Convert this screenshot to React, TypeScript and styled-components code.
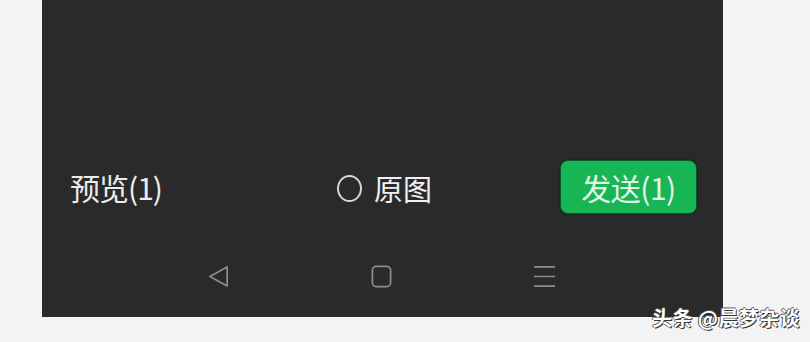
import React from "react";
import styled, { createGlobalStyle } from "styled-components";

const GlobalStyle = createGlobalStyle`
  html, body {
    margin: 0;
    padding: 0;
    background: #f3f3f5;
  }
  body {
    font-family: "Noto Sans CJK SC", "Noto Sans", sans-serif;
  }
`;

function App() {
  return (
    <>
      <GlobalStyle />
      <Page>
        <Panel>
          <Toolbar>
            <Preview>预览(1)</Preview>
            <Original>
              <Radio />
              <OriginalLabel>原图</OriginalLabel>
            </Original>
            <SendCell>
              <SendButton>发送(1)</SendButton>
            </SendCell>
          </Toolbar>
          <NavBar>
            <NavIcon viewBox="0 0 24 24">
              <path d="M21 2 L3 12 L21 22 Z" fill="none" stroke="#8d8d8d" strokeWidth="1.8" strokeLinejoin="round" />
            </NavIcon>
            <NavIcon viewBox="0 0 24 24">
              <rect x="2.5" y="1.5" width="19" height="21" rx="4" fill="none" stroke="#8d8d8d" strokeWidth="1.8" />
            </NavIcon>
            <NavIcon viewBox="0 0 24 24">
              <path d="M1 2 H23 M1 12 H23 M1 22 H23" stroke="#8d8d8d" strokeWidth="1.8" />
            </NavIcon>
          </NavBar>
        </Panel>
        <Watermark>头条 @晨梦杂谈</Watermark>
      </Page>
    </>
  );
}

export default App;

const Page = styled.div`
  position: relative;
  width: 810px;
  height: 342px;
  padding-left: 42px;
  box-sizing: border-box;
`;

const Panel = styled.div`
  width: 681px;
  height: 317px;
  background: #2a2a2a;
  display: flex;
  flex-direction: column;
  justify-content: flex-end;
`;

const Toolbar = styled.div`
  display: grid;
  grid-template-columns: 1fr auto 1fr;
  align-items: center;
  height: 54px;
  padding: 0 26px 0 28px;
`;

const Preview = styled.div`
  font-size: 30px;
  color: #ececec;
  letter-spacing: -1px;
  line-height: 1;
`;

const Original = styled.div`
  display: flex;
  align-items: center;
  gap: 12px;
  margin-top: 2px;
  padding-left: 2px;
`;

const Radio = styled.span`
  width: 21px;
  height: 23px;
  border: 2px solid #d6d6d6;
  border-radius: 50%;
`;

const OriginalLabel = styled.span`
  font-size: 29px;
  color: #f0f0f0;
  line-height: 1;
`;

const SendCell = styled.div`
  display: flex;
  justify-content: flex-end;
`;

const SendButton = styled.button`
  width: 137px;
  height: 54px;
  border: 1px solid #0d5a2a;
  border-radius: 8px;
  background: #17b553;
  color: #e2f6e8;
  font-family: "Noto Sans CJK SC", "Noto Sans", sans-serif;
  font-size: 30px;
  letter-spacing: -0.5px;
  padding: 0;
  box-shadow: 0 0 2px rgba(0, 0, 0, 0.6);
`;

const NavBar = styled.div`
  height: 103px;
  box-sizing: border-box;
  display: flex;
  justify-content: center;
  align-items: flex-start;
  padding: 51px 2px 0 0;
  gap: 140px;
`;

const NavIcon = styled.svg`
  width: 23px;
  height: 23px;
`;

const Watermark = styled.div`
  position: absolute;
  right: 10px;
  top: 303px;
  font-size: 20px;
  font-weight: 700;
  color: #ffffff;
  letter-spacing: 0.4px;
  text-shadow: 1px 1px 0 #333, -1px 0 0 #555, 0 -1px 0 #555;
`;
